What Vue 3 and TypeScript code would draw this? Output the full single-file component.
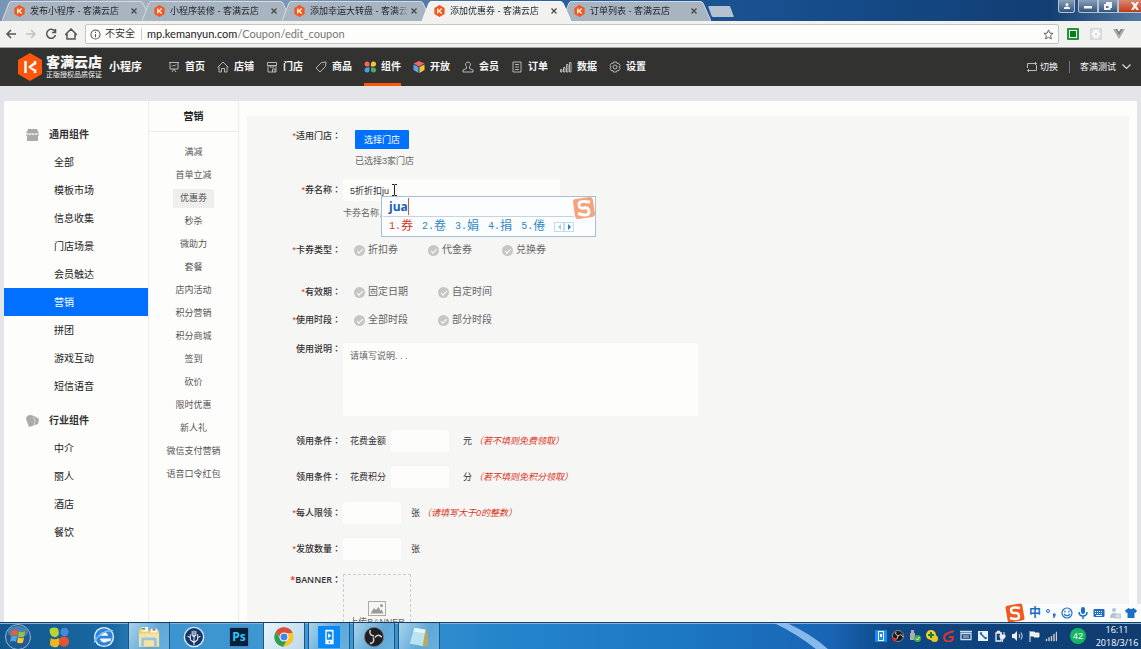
<script setup lang="ts">
import { ref } from 'vue'

interface Tab { title: string; active?: boolean }
interface NavItem { label: string; icon?: string; art?: 'clover' | 'cube'; active?: boolean }
interface Choice { name: string; label: string; options: string[]; gap: string }

const tabs: Tab[] = [
  { title: '发布小程序 - 客满云店' },
  { title: '小程序装修 - 客满云店' },
  { title: '添加幸运大转盘 - 客满云店' },
  { title: '添加优惠券 - 客满云店', active: true },
  { title: '订单列表 - 客满云店' },
]

const nav: NavItem[] = [
  { label: '首页', icon: 'M1 1.5h10M2 1.5v6.5h8V1.5M4 11l2-3 2 3M4 5.5l1.5-1.5 1 1L8 3.500' },
  { label: '店铺', icon: 'M.5 6.500L6 1l5.500 5.500M2 5.500V11h2.500V7.500h3V11H10V5.500' },
  { label: '门店', icon: 'M1.500 1.500h9v3h-9zM2 4.500V11h8V4.500M4 4.500v1.500h4V4.500M6.500 11V8H9v3' },
  { label: '商品', icon: 'M6.500 1.500L11 1l-.5 4.500L5 11 1 7zM8.500 3.500h.5' },
  { label: '组件', art: 'clover', active: true },
  { label: '开放', art: 'cube' },
  { label: '会员', icon: 'M6 1a2.500 2.500 0 0 1 1.500 4.500v2L11 9v2H1V9l3.500-1.500v-2A2.500 2.500 0 0 1 6 1z' },
  { label: '订单', icon: 'M2 1h8v10H2zM4 3.500h4M4 6h4M4 8.500h4' },
  { label: '数据', icon: 'M.5 8.500H2V11H.500zM3.500 6.500H5V11H3.500zM6.500 3.500H8V11H6.500zM9.500 1.500H11V11H9.500z' },
  { label: '设置', icon: 'M4.500 1h3l.5 1.500 1.500-.3L11 4.500 10 6l1 1.500-1.500 2.300L8 9.500 7.500 11h-3L4 9.500l-1.500.3L1 7.500 2 6 1 4.500l1.500-2.300 1.500.3zM6 4a2 2 0 1 0 0 4 2 2 0 0 0 0-4z' },
]

const general = ['全部', '模板市场', '信息收集', '门店场景', '会员触达', '营销', '拼团', '游戏互动', '短信语音']
const industry = ['中介', '丽人', '酒店', '餐饮']
const marketing = ['满减', '首单立减', '优惠券', '秒杀', '微助力', '套餐', '店内活动', '积分营销', '积分商城', '签到', '砍价', '限时优惠', '新人礼', '微信支付营销', '语音口令红包']
const choices: Choice[] = [
  { name: 'type', label: '卡券类型', options: ['折扣券', '代金券', '兑换券'], gap: 'gap-l' },
  { name: 'valid', label: '有效期', options: ['固定日期', '自定时间'], gap: 'gap-xl' },
  { name: 'period', label: '使用时段', options: ['全部时段', '部分时段'], gap: 'gap-m' },
]
const candidates = ['券', '卷', '娟', '捐', '倦']

const couponName = ref('5折折扣ju')
const address = ref('mp.kemanyun.com/Coupon/edit_coupon')
</script>

<template>
  <div class="screen">
    <header class="tabstrip">
      <nav class="tabs" aria-label="标签页">
        <div v-for="t in tabs" :key="t.title" class="tab" :class="{ active: t.active }">
          <svg class="tab-shape" viewBox="0 0 149 20" preserveAspectRatio="none" aria-hidden="true">
            <path d="M0 20L7 2Q8 .5 9 .5H138Q140 .5 141 2L149 20" />
          </svg>
          <svg class="favicon" viewBox="0 0 24 28" aria-hidden="true">
            <path d="M12 0l12 7v14l-12 7L0 21V7z" fill="#f4571c" />
            <path d="M8 8v12M17 8l-6 6 6 6" fill="none" stroke="#fff" stroke-width="3" />
          </svg>
          <a href="#" class="tab-title">{{ t.title }}</a>
          <button class="tab-close" aria-label="关闭">
            <svg viewBox="0 0 6 6"><path d="M.5.500l5 5M5.500.500l-5 5" /></svg>
          </button>
        </div>
        <button class="new-tab" aria-label="新标签页"></button>
      </nav>
      <div class="window-buttons">
        <button class="wb user" aria-label="用户"><svg viewBox="0 0 8 8"><circle cx="4" cy="2.500" r="1.500" /><path d="M1 7V5.500q3-2 6 0V7z" /></svg></button>
        <button class="wb min" aria-label="最小化"><svg viewBox="0 0 8 8"><path d="M0 4h8v2.500H0z" /></svg></button>
        <button class="wb max" aria-label="还原"><svg viewBox="0 0 8 8"><path d="M2 0h6v6H6.500v2H0V2h2zM2 4v2h2.500V4z" fill-rule="evenodd" /></svg></button>
        <button class="wb close" aria-label="关闭窗口"><svg viewBox="0 0 8 8"><path d="M0 0h2.500L4 2l1.500-2H8L5.500 4 8 8H5.500L4 6 2.500 8H0l2.500-4z" /></svg></button>
      </div>
    </header>

    <div class="toolbar">
      <button class="tool" aria-label="后退"><svg viewBox="0 0 12 12"><path d="M11 6H2M6 2L2 6l4 4" /></svg></button>
      <button class="tool dim" aria-label="前进"><svg viewBox="0 0 12 12"><path d="M1 6h9M6 2l4 4-4 4" /></svg></button>
      <button class="tool" aria-label="刷新"><svg viewBox="0 0 12 12"><path d="M10 3.500A4.500 4.500 0 1 0 10.500 7M10.500 1v3.500H7" /></svg></button>
      <button class="tool" aria-label="主页"><svg viewBox="0 0 12 12"><path d="M.5 6.500L6 1l5.500 5.500H10V11H2V6.500z" /></svg></button>
      <div class="omnibox">
        <svg class="info" viewBox="0 0 12 12" aria-hidden="true"><circle cx="6" cy="6" r="5" /><path d="M6 5.500V9M6 3v1.300" /></svg>
        <span class="insecure">不安全</span>
        <div class="url">
          <input v-model="address" class="url-input" aria-label="地址" />
          <span class="url-text" aria-hidden="true"><b>mp.kemanyun.com</b>/Coupon/edit_coupon</span>
        </div>
        <svg class="star" viewBox="0 0 12 12" aria-hidden="true"><path d="M6 1l1.500 3.500 3.500.3-2.700 2.400.9 3.600L6 9l-3.200 1.800.9-3.600L1 4.800l3.500-.3z" /></svg>
      </div>
      <svg class="ext" viewBox="0 0 12 12" aria-hidden="true"><rect width="12" height="12" rx="1" fill="#219332" /><rect x="2.500" y="2.500" width="7" height="7" fill="#087d1d" stroke="#fff" /></svg>
      <svg class="ext" viewBox="0 0 12 12" aria-hidden="true"><rect width="12" height="12" fill="#d9d9d9" /><g fill="none" stroke="#fff"><ellipse cx="6" cy="6" rx="4.500" ry="1.800" /><ellipse cx="6" cy="6" rx="4.500" ry="1.800" transform="rotate(60 6 6)" /><ellipse cx="6" cy="6" rx="4.500" ry="1.800" transform="rotate(120 6 6)" /></g></svg>
      <svg class="ext" viewBox="0 0 12 12" aria-hidden="true"><path d="M0 1h4l2 3 2-3h4L6 11z" fill="#aaa" /><path d="M2.500 1H4l2 3 2-3h1.500L6 7z" fill="#7c7c7c" /></svg>
    </div>

    <header class="site">
      <svg class="logo" viewBox="0 0 24 28" aria-hidden="true">
        <path d="M12 0l12 7v14l-12 7L0 21V7z" fill="#ff560b" />
        <path d="M7.500 8v12M17 8v2.500l-2 1-3 2.500 3 2.500 2 1V20" fill="none" stroke="#fff" stroke-width="2.500" />
      </svg>
      <div class="brand">
        <strong>客满云店</strong>
        <small>正版授权品质保证</small>
      </div>
      <strong class="product">小程序</strong>
      <nav class="mainnav" aria-label="主导航">
        <a v-for="n in nav" :key="n.label" href="#" :class="{ active: n.active }">
          <svg viewBox="0 0 12 12" aria-hidden="true">
            <path v-if="n.icon" :d="n.icon" fill="none" stroke="#c4c4c4" stroke-width="0.900" />
            <g v-else-if="n.art === 'clover'">
              <path d="M3 .5a2.500 2.500 0 1 0 0 5h2.500V3A2.500 2.500 0 0 0 3 .5z" fill="#f0665e" />
              <path d="M9.500.500A2.500 2.500 0 0 0 7 3v2.500h2.500a2.500 2.500 0 0 0 0-5z" fill="#f8c637" />
              <path d="M3 6.500h2.500V9A2.500 2.500 0 1 1 3 6.500z" fill="#4c9bea" />
              <path d="M7 6.500h2.500A2.500 2.500 0 1 1 7 9z" fill="#46ae58" />
            </g>
            <g v-else>
              <path d="M6 0l5.500 2.500L6 5.500.5 2.500z" fill="#f2665f" />
              <path d="M.5 3.500l5 2.500v6L.5 9z" fill="#5aa5f3" />
              <path d="M11.500 3.500l-5 2.500v6l5-3z" fill="#f8c637" />
            </g>
          </svg>
          <span>{{ n.label }}</span>
        </a>
      </nav>
      <div class="account">
        <a href="#" class="switch">
          <svg viewBox="0 0 12 12" aria-hidden="true"><path d="M1.500 5V2.500h9M9 1l1.500 1.500L9 4M10.500 7v2.500h-9M3 8L1.500 9.500 3 11M1.500 5v2M10.500 4v3" /></svg>切换
        </a>
        <button class="user-menu">客满测试
          <svg viewBox="0 0 9 6" aria-hidden="true"><path d="M.5.500l4 4 4-4" /></svg>
        </button>
      </div>
    </header>

    <div class="page">
      <div class="panel">
        <nav class="side" aria-label="组件分类">
          <h2>
            <svg viewBox="0 0 13 12" aria-hidden="true"><path d="M2 0h9l2 4.500H0zM0 5l1 1.200L2.500 5 4 6.200 5.500 5 7 6.200 8.500 5 10 6.200 11.500 5 13 6v.5l-1 .5v5H1V7L0 6.500z" fill="#aaa" /></svg>
            通用组件
          </h2>
          <a v-for="g in general" :key="g" href="#" :class="{ current: g === '营销' }">{{ g }}</a>
          <h2 class="second">
            <svg viewBox="0 0 13 12" aria-hidden="true"><path d="M0 4Q0 0 5 0l3 1 5 3-1 5-6 2-3 1z" fill="#aaa" /><path d="M7 2l2 3-1 5" fill="none" stroke="#ddd" /></svg>
            行业组件
          </h2>
          <a v-for="g in industry" :key="g" href="#">{{ g }}</a>
        </nav>

        <nav class="subside" aria-label="营销">
          <h3>营销</h3>
          <a v-for="m in marketing" :key="m" href="#"><span :class="{ current: m === '优惠券' }">{{ m }}</span></a>
        </nav>

        <main class="content">
          <form class="form" @submit.prevent>
            <div class="row top">
              <span class="label req">适用门店<i>：</i></span>
              <div class="field shop">
                <button type="button" class="primary">选择门店</button>
                <p>已选择3家门店</p>
              </div>
            </div>

            <div class="row gap-s">
              <label class="label req tall" for="name">券名称<i>：</i></label>
              <div class="field name">
                <input id="name" v-model="couponName" class="box wide" />
                <p>卡券名称，</p>
                <svg class="ibeam" viewBox="0 0 7 12" aria-hidden="true"><path d="M1 .5h2l.5.5.5-.5h2M3.500 1v10M1 11.500h2l.5-.5.5.5h2" /></svg>
                <div class="ime">
                  <div class="typed"><span>jua</span></div>
                  <ol>
                    <li v-for="(c, i) in candidates" :key="c"><i>{{ i + 1 }}.</i>{{ c }}</li>
                    <li class="pager"><button type="button" aria-label="上一页" class="prev"></button><button type="button" aria-label="下一页" class="next"></button></li>
                  </ol>
                  <svg class="sogou" viewBox="0 0 24 24" aria-hidden="true"><rect x="2" y="2" width="20" height="20" rx="3" fill="#f7a27b" transform="rotate(-8 12 12)" /><path d="M18 6Q7 4 7 8.500t5 3.500 5 4-11 1.500" fill="none" stroke="#fff" stroke-width="3" /></svg>
                </div>
              </div>
            </div>

            <div v-for="c in choices" :key="c.name" class="row" :class="c.gap" role="radiogroup" :aria-label="c.label">
              <span class="label req">{{ c.label }}<i>：</i></span>
              <div class="field radios">
                <label v-for="o in c.options" :key="o"><input type="radio" :name="c.name" :value="o" />{{ o }}</label>
              </div>
            </div>

            <div class="row gap-m top">
              <label class="label" for="desc">使用说明<i>：</i></label>
              <div class="field grow"><textarea id="desc" class="box" placeholder="请填写说明. . ."></textarea></div>
            </div>

            <div class="row gap-n">
              <span class="label">领用条件<i>：</i></span>
              <div class="field">
                <label class="prefix" for="money">花费金额</label><input id="money" class="box" />
                <span class="unit">元</span><em>（若不填则免费领取）</em>
              </div>
            </div>
            <div class="row gap-n">
              <span class="label">领用条件<i>：</i></span>
              <div class="field">
                <label class="prefix" for="points">花费积分</label><input id="points" class="box" />
                <span class="unit">分</span><em>（若不填则免积分领取）</em>
              </div>
            </div>
            <div class="row gap-n">
              <label class="label req" for="limit">每人限领<i>：</i></label>
              <div class="field">
                <input id="limit" class="box" /><span class="unit near">张</span><em>（请填写大于0的整数）</em>
              </div>
            </div>
            <div class="row gap-n">
              <label class="label req" for="total">发放数量<i>：</i></label>
              <div class="field"><input id="total" class="box" /><span class="unit near">张</span></div>
            </div>
            <div class="row gap-n top">
              <span class="label req latin">BANNER<i>：</i></span>
              <div class="field">
                <button type="button" class="upload">
                  <svg viewBox="0 0 18 15" aria-hidden="true"><rect x=".5" y=".5" width="17" height="14" fill="none" stroke="#aaa" /><path d="M2.500 12.500L6 7l2 2 2.500-3 2 3.500 1-1 2 4z" fill="#999" /><circle cx="13.500" cy="4.500" r="1.500" fill="#999" /></svg>
                  上传BANNER
                </button>
              </div>
            </div>
          </form>
        </main>
      </div>

      <div class="imebar">
        <svg class="s" viewBox="0 0 20 20" aria-hidden="true"><rect x="1.500" y="1.500" width="17" height="17" rx="2" fill="#f2591f" transform="rotate(-10 10 10)" /><path d="M15 5Q6 3.500 6 7t4 3 4 3.500-9 1.500" fill="none" stroke="#fff" stroke-width="2.500" /></svg>
        <span>中</span>
        <svg viewBox="0 0 12 12"><circle cx="3" cy="4" r="1.500" fill="none" stroke="#1b6fc8" /><path d="M8 6.500h2.500V9L9 11H8l.5-2H8z" fill="#1b6fc8" /></svg>
        <svg viewBox="0 0 12 12"><circle cx="6" cy="6" r="5" fill="none" stroke="#1b6fc8" stroke-width="1.200" /><path d="M4 3.500v2M8 3.500v2M3 7q3 3.500 6 0" fill="none" stroke="#1b6fc8" stroke-width="1.200" /></svg>
        <svg viewBox="0 0 12 12"><rect x="4" y="0" width="4" height="7" rx="2" fill="#1b6fc8" /><path d="M2 5q0 4 4 4t4-4M6 9v3" fill="none" stroke="#1b6fc8" stroke-width="1.500" /></svg>
        <svg viewBox="0 0 12 12"><rect x=".5" y="2" width="11" height="8" rx="1" fill="#1b6fc8" /><path d="M2 4.500h8M2 6.500h8" stroke="#fff" stroke-dasharray="1 1" /><path d="M3 8.500h6" stroke="#fff" /></svg>
        <svg viewBox="0 0 12 12"><circle cx="5" cy="3" r="2" fill="#b5c3d2" /><path d="M1 11Q1 6 5 6t4 5z" fill="#b5c3d2" /><rect x="6" y="7" width="6" height="4" fill="#d5dde6" stroke="#b5c3d2" /></svg>
        <svg viewBox="0 0 12 12"><path d="M3.500 1q2.500 2 5 0L12 3.500l-1.500 2.500-1-.5V11h-7V5.500l-1 .5L0 3.500z" fill="#1b6fc8" /></svg>
      </div>
    </div>

    <footer class="taskbar">
      <button class="task plain start" aria-label="开始"><svg viewBox="0 0 26 26"><circle cx="13" cy="13" r="12.500" fill="#245a8e" stroke="#8db9d8" /><ellipse cx="13" cy="8" rx="10" ry="6" fill="#6d9fc4" opacity=".6" /><path d="M7 7q3-2 6 0l-1 5q-3-2-6 0z" fill="#e8622b" /><path d="M14 7.500q3 1.500 6 0l-1 5q-3 1.500-6 0z" fill="#8ec641" /><path d="M6 13q3-2 6 0l-1 5q-3-2-6 0z" fill="#4aa6e8" /><path d="M13 13.500q3 1.500 6 0l-1 5q-3 1.500-6 0z" fill="#fbc93a" /></svg></button>
      <button class="task plain" aria-label="浏览器"><svg viewBox="0 0 24 24"><path d="M2 3Q7 0 11 3l1 5q-1 5-6 4-5-2-4-9z" fill="#b8d532" /><circle cx="18" cy="6.500" r="4.500" fill="#4588dc" /><path d="M3 13q4 3 9 0 3 6-2 10-6 1-8-3z" fill="#f0b71d" /><circle cx="17.500" cy="17" r="5.500" fill="#e5552e" /></svg></button>
      <button class="task plain" aria-label="IE"><svg viewBox="0 0 24 24"><circle cx="12" cy="12" r="11" fill="#e9f4fd" /><circle cx="12" cy="12" r="9.500" fill="#2f83d8" /><path d="M7.500 10.500q1-4 4.500-4t4.500 4zM7.500 13.500H20l-1 3h-3q-4 3-7 0-1.300-1-1.500-3z" fill="#f2f8fd" /><path d="M1 18Q9 4 22 5" fill="none" stroke="#7dbdf0" stroke-width="1.500" /></svg></button>
      <button class="task" aria-label="资源管理器"><svg viewBox="0 0 24 24"><path d="M1 3h8l2 2h12v18H1z" fill="#e9cd78" /><path d="M4 1h7v5H4zM14 3h7v4h-7z" fill="#f8fbee" /><path d="M4 3h4" stroke="#5dab45" stroke-width="2" /><path d="M16 4h3" stroke="#df5b3e" stroke-width="2" /><path d="M1 8h22v14H1z" fill="#f6e3a1" /><path d="M5 22v-7q0-1 1-1h12q1 0 1 1v7" fill="none" stroke="#91c8e9" stroke-width="3" /></svg></button>
      <button class="task plain" aria-label="树"><svg viewBox="0 0 24 24"><circle cx="12" cy="12" r="10.500" fill="#16366a" stroke="#dce8f5" stroke-width="1.500" /><path d="M12 21V5M12 18l-4-3V9M8 13l-3-2M12 18l4-3V9M16 13l3-2M12 12l-2-2V5.500M12 12l2-2V5.500" fill="none" stroke="#e9f1fa" stroke-width="1.100" /></svg></button>
      <button class="task plain" aria-label="Photoshop"><span class="ps">Ps</span></button>
      <button class="task on" aria-label="Chrome"><svg viewBox="0 0 24 24"><circle cx="12" cy="12" r="10.500" fill="#f9c52a" /><path d="M3 6.500A10.500 10.500 0 0 1 21.500 7.500H12L8 13z" fill="#dd4b3e" /><path d="M3 6.500A10.500 10.500 0 0 0 11 22.500L15.500 15 8 14z" fill="#2f9e52" /><circle cx="12" cy="12" r="5" fill="#fff" /><circle cx="12" cy="12" r="3.800" fill="#4386f0" /></svg></button>
      <button class="task" aria-label="手机助手"><svg viewBox="0 0 24 24"><rect x="0" y="0" width="24" height="24" rx="1" fill="#0989f8" /><rect x="8" y="4" width="9" height="16" rx="1" fill="#fff" /><path d="M9.500 6h6v9h-6z" fill="#0989f8" /><path d="M11 8l3.500 2.500L11 13z" fill="#fff" /><circle cx="12.500" cy="17.500" r="1" fill="#0989f8" /></svg></button>
      <button class="task" aria-label="OBS"><svg viewBox="0 0 24 24"><circle cx="12" cy="12" r="10.500" fill="#1f1f22" stroke="#77777b" /><g fill="none" stroke="#d0d0d4" stroke-width="1.700"><path d="M12 11Q6 10 8 4.500" /><path d="M12 11Q6 10 8 4.500" transform="rotate(120 12 12)" /><path d="M12 11Q6 10 8 4.500" transform="rotate(240 12 12)" /></g></svg></button>
      <button class="task" aria-label="记事本"><svg viewBox="0 0 24 24"><path d="M8 3l13 1 1 17-5 2z" fill="#bda75d" /><path d="M7 2l12 2-3 18-14-3z" fill="#b9e3ee" /><path d="M7 2l12 2-1 4L6 6z" fill="#e6f6f8" /></svg></button>

      <svg class="streak" viewBox="0 0 120 27" preserveAspectRatio="none" aria-hidden="true"><path d="M55 0h13q26 12 42 27H98Q80 12 55 0z" fill="#9cc8f4" opacity=".85" /></svg>

      <div class="tray">
        <svg viewBox="0 0 12 12"><rect width="12" height="12" rx="1" fill="#1b8ff1" /><rect x="3.500" y="1.500" width="5" height="9" fill="none" stroke="#fff" /><path d="M5 4h2v3H5z" fill="#fff" /></svg>
        <svg viewBox="0 0 12 12"><circle cx="6" cy="6" r="5.500" fill="#191919" stroke="#8b8b8b" /><path d="M6 6Q2 4 4 2M6 6q3-3 5 1M6 6q0 3-3 4" fill="none" stroke="#ccc" /><circle cx="2.500" cy="9.500" r="2" fill="#e4282b" /></svg>
        <svg viewBox="0 0 12 12"><path d="M2 0h3v3h1v7H1V3h1z" fill="#a9adb2" /><circle cx="8.500" cy="8.500" r="3.500" fill="#42ad48" /><path d="M7 8.500l1.500 1.500 2-3" fill="none" stroke="#fff" /></svg>
        <svg viewBox="0 0 12 12"><circle cx="5" cy="5" r="5" fill="#f3d12d" /><circle cx="8.500" cy="8.500" r="3.500" fill="#e6c827" /><path d="M5 2v6M2 5h6" stroke="#247a32" stroke-width="2" /></svg>
        <svg viewBox="0 0 12 12"><path d="M11 1L5 3Q1 5 1 8q1 4 5 3.500 4-.5 4-4.500H6" fill="none" stroke="#d9352b" stroke-width="2" /></svg>
        <svg viewBox="0 0 12 12"><path d="M0 1.500h12M1 3.500h10v6H1z" fill="none" stroke="#cfdbe8" stroke-width="1.300" /><path d="M4 5v3M6 5v3M8 5v3" stroke="#cfdbe8" /></svg>
        <svg viewBox="0 0 12 12"><rect x="1" y="1" width="10" height="10" fill="#e8f2fa" /><path d="M3 3l6 6M3 3h2M9 7v2" stroke="#1d65a8" stroke-width="1.500" /></svg>
        <svg viewBox="0 0 12 12"><path d="M2 3h5v8H2zM3.500 3V1.500h2V3" fill="none" stroke="#eee" stroke-width="1.300" /><path d="M7 2v3M10 2v3M6 5h5v2L9.500 9h-2L6 7zM8.500 9v3" stroke="#eee" fill="#eee" /></svg>
        <svg viewBox="0 0 12 12"><path d="M1 4h2l3-3v10L3 8H1z" fill="#eee" /><path d="M8 4q1.500 2 0 4M10 2.500q2.500 3.500 0 7" fill="none" stroke="#ddd" /></svg>
        <svg viewBox="0 0 12 12"><path d="M2 1v11M2.500 2h4v1H11v4H6V6H2.500z" fill="#eee" stroke="#eee" /></svg>
        <svg viewBox="0 0 12 12"><path d="M1 9h1v2H1zM3.500 7.500h1V11h-1zM6 6h1v5H6zM8.500 4h1v7h-1zM11 2h1v9h-1z" fill="#eee" stroke="#aaa" stroke-width=".5" /></svg>
        <span class="badge">42</span>
        <div class="clock"><time>16:11</time><time>2018/3/16</time></div>
      </div>
    </footer>
  </div>
</template>

<style>
html, body { margin: 0; overflow: hidden; }
</style>

<style scoped>
.screen {
  height: 100vh;
  display: flex;
  flex-direction: column;
  overflow: hidden;
  background: #e4e5e8;
  color: #333;
  font: 9px/12px "Liberation Sans", "Noto Sans CJK SC", sans-serif;
}
*, ::before, ::after { box-sizing: border-box; }
button, input, textarea { font: inherit; color: inherit; border: 0; padding: 0; margin: 0; background: none; outline: 0; }
a { color: inherit; text-decoration: none; }
svg { display: block; flex: none; }
p, h2, h3, ol { margin: 0; padding: 0; font-size: inherit; }

/* browser chrome */
.tabstrip {
  display: flex;
  justify-content: space-between;
  height: 21px;
  flex: none;
  background: linear-gradient(90deg, #7794b6 0, #a4b2c0 12%, #6b8cb0 30%, #215a9c 52%, #144a87 75%, #123e73 92%, #537aa0 100%);
}
.tabs { display: flex; align-items: flex-end; padding-left: 2px; }
.tab {
  position: relative;
  display: flex;
  align-items: center;
  width: 149px;
  height: 20px;
  margin-right: -9px;
  padding: 0 11px 0 12px;
  color: #20262c;
}
.tab-shape { position: absolute; inset: 0; width: 100%; height: 100%; }
.tab-shape path { fill: #a8b4c0; stroke: #d2dae2; stroke-width: 1; }
.tab.active { z-index: 1; }
.tab.active .tab-shape path { fill: #f1f1f0; stroke: #f8f8f8; }
.favicon { position: relative; width: 11px; height: 12px; margin-right: 5px; }
.tab-title { position: relative; flex: 1; overflow: hidden; white-space: nowrap; mask-image: linear-gradient(90deg, #000 84px, transparent 100px); }
.tab-close { position: relative; display: grid; place-items: center; width: 12px; height: 12px; }
.tab-close svg { width: 6px; height: 6px; }
.tab-close path { stroke: #444; stroke-width: 1.2; fill: none; }
.new-tab { width: 22px; height: 11px; margin: 0 0 4px 8px; background: #b5c2cf; transform: skewX(20deg); border-radius: 1px; }
.window-buttons { display: flex; align-items: flex-start; }
.wb { display: grid; place-items: center; height: 13px; width: 20px; background: linear-gradient(#8a9fb8, #35557c); border: 1px solid #b3c3d4; border-top: 0; }
.wb svg { width: 8px; height: 8px; }
.wb path, .wb circle { fill: #f4f4f4; }
.user { width: 17px; margin-right: 3px; border-radius: 0 0 3px 3px; }
.min { border-radius: 0 0 0 3px; }
.close { width: 23px; padding-left: 10px; background: linear-gradient(#d98a75, #c43b18); border-right: 0; }

.toolbar { display: flex; align-items: center; gap: 8px; height: 27px; flex: none; padding: 0 13px 0 5px; background: #f1f1f0; border-bottom: 1px solid #a5a5a3; }
.tool { width: 12px; height: 12px; }
.tool svg { width: 12px; height: 12px; fill: none; stroke: #555; stroke-width: 1.5; }
.tool.dim { opacity: .3; }
.omnibox { flex: 1; display: flex; align-items: center; height: 20px; background: #fdfdfc; border: 1px solid #c4c4c3; border-radius: 2px; padding: 0 4px; }
.info { width: 11px; height: 11px; fill: none; stroke: #555; stroke-width: 1.1; margin-right: 4px; }
.insecure { font-size: 10px; padding-right: 6px; border-right: 1px solid #ccc; }
.url { position: relative; flex: 1; margin-left: 5px; font: 11px/16px Lato, sans-serif; }
.url-input { display: block; width: 100%; height: 16px; color: transparent; }
.url-text { position: absolute; inset: 0; color: #777; pointer-events: none; }
.url-text b { font-weight: 400; color: #222; }
.star { width: 11px; height: 11px; fill: none; stroke: #555; }
.ext { width: 12px; height: 12px; margin-right: 3px; }

/* site header */
.site { display: flex; align-items: center; flex: none; height: 38px; padding: 0 10px 0 18px; background: #323230; color: #f7f7f7; }
.logo { width: 24px; height: 28px; margin-right: 4px; }
.brand { display: flex; flex-direction: column; width: 63px; white-space: nowrap; }
.brand strong { font-size: 14px; line-height: 15px; font-weight: 900; }
.brand small { font-size: 7px; line-height: 9px; }
.product { font-size: 11px; width: 59px; }
.mainnav { display: flex; align-self: stretch; gap: 12px; }
.mainnav a { display: flex; align-items: center; gap: 5px; font-size: 10px; font-weight: 700; border-bottom: 3px solid transparent; border-top: 3px solid transparent; white-space: nowrap; }
.mainnav a.active { border-bottom-color: #ff560b; }
.mainnav svg { width: 12px; height: 12px; }
.account { display: flex; align-items: center; margin-left: auto; white-space: nowrap; }
.switch { display: flex; align-items: center; gap: 2px; padding-right: 11px; border-right: 1px solid #777; }
.switch svg { width: 12px; height: 12px; fill: none; stroke: #bbb; }
.user-menu { display: flex; align-items: center; gap: 6px; padding-left: 10px; }
.user-menu svg { width: 9px; height: 6px; fill: none; stroke: #ddd; stroke-width: 1.2; }

/* page */
.page { position: relative; flex: 1; min-height: 0; padding: 15px 4px 0; overflow: hidden; }
.panel { display: flex; min-height: 100%; background: #fdfdfc; }
.side { width: 144px; flex: none; padding-top: 20px; font-size: 10px; color: #222; }
.side h2 { display: flex; align-items: center; gap: 10px; height: 27px; padding: 1px 0 0 22px; font-weight: 700; color: #333; }
.side h2.second { margin-top: 7px; }
.side h2 svg { width: 13px; height: 12px; }
.side a { display: block; height: 28px; line-height: 30px; padding-left: 50px; }
.side a.current { background: #0170fe; color: #fff; }
.subside { width: 91px; flex: none; border: solid #ececec; border-width: 0 1px; text-align: center; color: #555; }
.subside h3 { height: 31px; line-height: 31px; font-size: 10px; margin-bottom: 9px; border-bottom: 1px solid #ececec; color: #222; }
.subside a { display: grid; place-items: center; height: 23px; }
.subside span { line-height: 19px; padding: 0 7px; }
.subside .current { background: #eeeeed; }
.content { flex: 1; min-width: 0; padding: 15px 8px 0; }
.form { min-height: 100%; padding: 14px 0 40px; background: #f6f6f5; }

.row { display: flex; align-items: center; }
.row.top { align-items: flex-start; }
.gap-s { margin-top: 12px; align-items: flex-start; }
.gap-n { margin-top: 14px; }
.gap-m { margin-top: 16px; }
.gap-l { margin-top: 25px; }
.gap-xl { margin-top: 30px; }
.label { width: 96px; flex: none; padding-right: 2px; text-align: right; white-space: nowrap; font-weight: 500; }
.label i { font-style: normal; font-family: "Noto Sans CJK TC", sans-serif; line-height: 1; }
.label.req::before { content: "*"; color: #e02a18; }
.label.tall { line-height: 22px; }
.label.latin { font-family: "Open Sans", sans-serif; font-weight: 600; }
.field { display: flex; align-items: center; white-space: nowrap; }
.field.grow { flex: 1; }
.shop { flex-direction: column; align-items: flex-start; padding-left: 12px; color: #666; }
.primary { width: 54px; height: 19px; background: #0170fe; color: #fff; border-radius: 1px; margin-bottom: 6px; }
.box { width: 58px; height: 22px; padding: 0 7px; background: #fdfdfc; border-radius: 2px; }
.box.wide { width: 217px; display: block; }
textarea.box { width: 355px; max-width: 100%; height: 73px; padding: 7px; resize: none; display: block; }
textarea::placeholder { color: #666; opacity: 1; }
.row.gap-m.top { margin-top: 17px; }
.name { position: relative; display: block; }
.name p { margin-top: 6px; color: #666; }
.ibeam { position: absolute; left: 48px; top: 5px; width: 7px; height: 12px; fill: none; stroke: #222; }
.radios { gap: 30px; padding-left: 11px; font-size: 10px; color: #666; }
.radios label { display: flex; align-items: center; gap: 3px; }
.radios input { appearance: none; display: grid; place-items: center; width: 11px; height: 11px; border-radius: 50%; background: #c6c6c5; }
.radios input::after { content: ""; width: 6px; height: 3px; border: solid #fff; border-width: 0 0 1px 1px; transform: rotate(-45deg); }
.prefix { width: 48px; padding-left: 7px; }
.unit { margin: 0 2px 0 14px; }
.unit.near { margin-left: 10px; }
em { color: #dd3322; }
.upload { display: flex; flex-direction: column; align-items: center; width: 68px; height: 68px; padding-top: 26px; border: 1px dashed #ccc; color: #666; }
.upload svg { width: 18px; height: 15px; }

/* input method */
.ime { position: absolute; left: 38px; top: 17px; width: 215px; height: 41px; padding: 0 21px 0 1px; background: #fbfdfe; border: 1px solid #a9bfd2; z-index: 2; }
.typed { height: 20px; padding-left: 6px; border-bottom: 1px solid #c9d3dc; font: 700 12px/20px "Open Sans", sans-serif; color: #1560b0; }
.typed span { border-right: 1px solid #e05040; }
.ime ol { display: flex; gap: 9px; padding-left: 6px; list-style: none; font-size: 12px; line-height: 19px; color: #2d87c8; }
.ime li { display: flex; }
.ime li:first-child { color: #d4342a; }
.ime i { font: 10px/20px "Liberation Mono", monospace; }
.pager { align-self: center; }
.pager button { display: grid; place-items: center; width: 10px; height: 10px; border: 1px solid #c1dcee; }
.pager button::after { content: ""; border: 3px solid transparent; }
.prev::after { border-right-color: #a5cbe4 !important; margin-left: -3px; }
.next::after { border-left-color: #1f7fc4 !important; margin-right: -3px; }
.sogou { position: absolute; right: -1px; top: -1px; width: 24px; height: 24px; }
.imebar { position: absolute; right: 0; bottom: 0; display: flex; align-items: center; gap: 4px; height: 18px; padding: 0 4px 0 2px; background: #fbfcfd; color: #1b6fc8; font-size: 12px; font-weight: 700; }
.imebar svg { width: 12px; height: 12px; }
.imebar .s { width: 20px; height: 20px; margin-left: -2px; }

/* taskbar */
.taskbar {
  position: relative;
  display: flex;
  flex: none;
  height: 27px;
  border-top: 1px solid #173f66;
  box-shadow: inset 0 1px #82b6dc;
  background: linear-gradient(90deg, #11568c 0, #1b6aa5 10%, #3d95cf 14%, #3f98d2 30%, #2384cb 45%, #1c77c2 60%, #1964b4 73%, #0f4785 78%, #103c70 100%);
}
.task { display: grid; place-items: center; width: 42px; height: 28px; margin-right: 3px; border: 1px solid #1f5583; border-top: 0; background: linear-gradient(120deg, #a9d3ec, #5ca8d8 60%, #69b1df); overflow: hidden; }
.task svg { width: 22px; height: 22px; }
.task.plain { border-color: transparent; background: none; }
.task.start { width: 35px; }
.task.on { background: linear-gradient(120deg, #e8f3f9, #b9d9ec); }
.start svg { width: 26px; height: 26px; }
.ps { width: 20px; height: 20px; background: #06203c; border: 1px solid #3c8abf; color: #35c2f5; font: 700 12px/17px "Open Sans", sans-serif; }
.streak { position: absolute; left: 63%; top: 0; width: 120px; height: 27px; }
.tray { display: flex; align-items: center; gap: 5px; margin-left: auto; color: #fff; }
.tray svg { width: 12px; height: 12px; }
.badge { width: 16px; height: 16px; margin-left: 8px; border-radius: 50%; background: #14b563; text-align: center; line-height: 16px; }
.clock { display: flex; flex-direction: column; width: 48px; margin-left: 2px; text-align: center; font: 9px/13px "Open Sans", sans-serif; }
</style>
